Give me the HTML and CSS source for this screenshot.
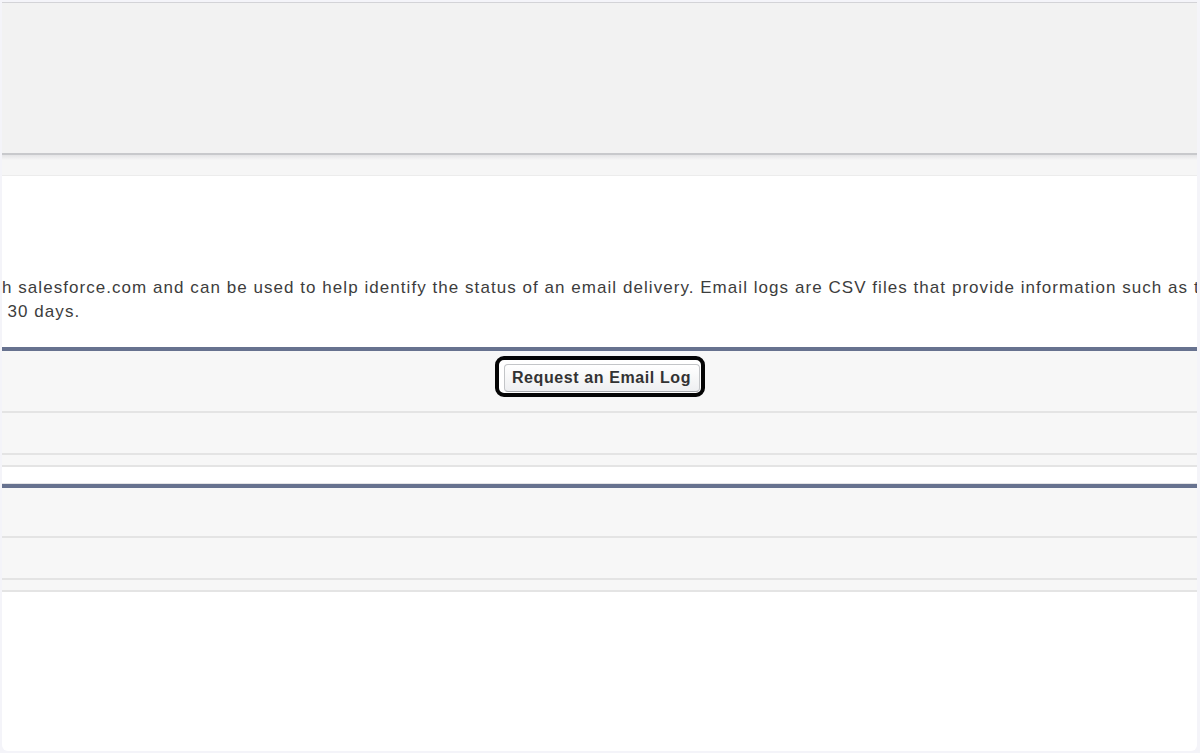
FILE: index.html
```html
<!DOCTYPE html>
<html lang="en">
<head>
<meta charset="utf-8">
<title>Email Log Files</title>
<link rel="stylesheet" href="styles.css">
</head>
<body>
<div class="panel">
  <div class="header"></div>
  <div class="subbar"></div>
  <div class="content">
    <div class="desc">
      <p class="line">h salesforce.com and can be used to help identify the status of an email delivery. Email logs are CSV files that provide information such as t</p>
      <p class="line line-cut">t 30 days.</p>
    </div>
    <div class="list list-first">
      <div class="row row-tall">
        <span class="focus-ring"><button class="btn" type="button">Request an Email Log</button></span>
      </div>
      <div class="row row-mid"></div>
      <div class="row row-thin"></div>
    </div>
    <div class="list list-second">
      <div class="row row-head"></div>
      <div class="row row-mid"></div>
      <div class="row row-thin"></div>
    </div>
  </div>
</div>
</body>
</html>
```
FILE: styles.css
```css
html, body {
  margin: 0;
  height: 753px;
  overflow: hidden;
}
body {
  background: #f4f4f9;
  padding: 2px 3px 2px 2px;
  box-sizing: border-box;
  font-family: "Liberation Sans", Arial, Helvetica, sans-serif;
}
.panel {
  height: 749px;
  background: #ffffff;
  border-radius: 0 0 6px 6px;
  overflow: hidden;
  display: flex;
  flex-direction: column;
}
.header {
  height: 150px;
  background: #f2f2f2;
  border-top: 1px solid #d3d3d7;
  border-bottom: 2px solid #c8c9cc;
  flex: none;
}
.subbar {
  height: 20px;
  background: linear-gradient(#e4e4e6 0, #f6f6f6 5px, #f6f6f6 100%);
  border-bottom: 1px solid #ececec;
  flex: none;
}
.content {
  flex: 1;
  padding-top: 100px;
}
.desc {
  overflow: hidden;
  height: 48px;
  margin-bottom: 23px;
}
.line {
  margin: 0;
  white-space: nowrap;
  font-size: 17px;
  line-height: 24px;
  letter-spacing: 1.05px;
  color: #3d3d3d;
}
.line-cut {
  text-indent: -6px;
}
.list {
  border-top: 4px solid #67728f;
}
.list-second {
  margin-top: 17px;
  box-shadow: 0 -1px 0 #e4e4e6;
}
.row {
  background: #f7f7f7;
  border-bottom: 2px solid #e4e4e4;
}
.row-tall {
  height: 55px;
  padding-top: 5px;
  display: flex;
  justify-content: center;
  align-items: flex-start;
}
.row-head {
  height: 48px;
}
.row-mid {
  height: 40px;
}
.row-thin {
  height: 10px;
}
.focus-ring {
  display: inline-flex;
  border: 4px solid #050505;
  border-radius: 9px;
  padding: 4px 1px 1px 5px;
  background: #ffffff;
}
.btn {
  width: 196px;
  height: 28px;
  margin: 0;
  padding: 0;
  font-family: "Liberation Sans", Arial, Helvetica, sans-serif;
  font-weight: bold;
  font-size: 16px;
  letter-spacing: 0.6px;
  color: #333333;
  background: linear-gradient(#ffffff, #eeeff1);
  border: 1px solid #c3c5c8;
  border-bottom-color: #a7a9ad;
  border-radius: 4px;
}
```
